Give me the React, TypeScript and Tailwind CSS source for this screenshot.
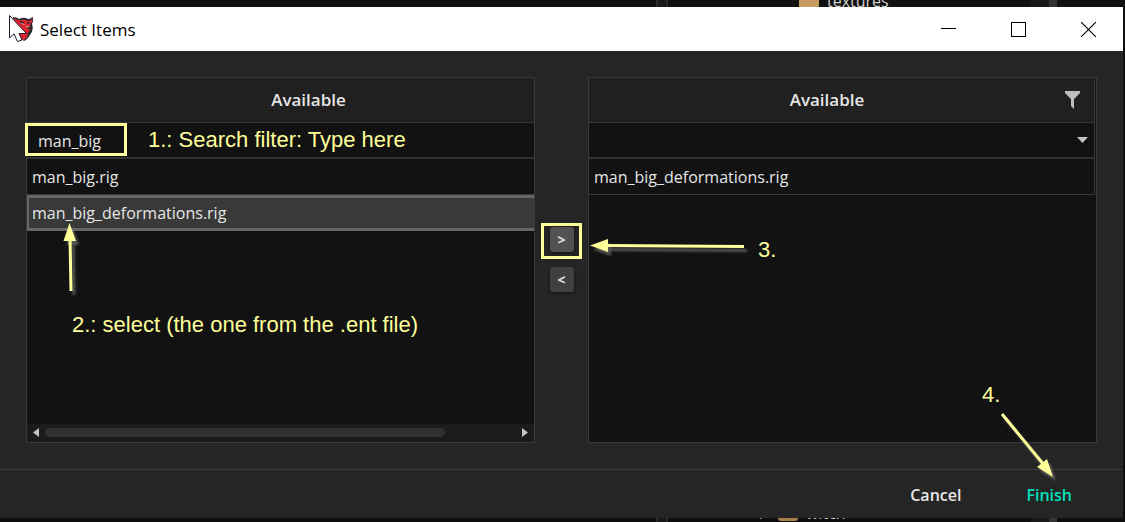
import { useState } from "react";
import type { ReactNode } from "react";

const NOTE = "absolute whitespace-nowrap font-['Liberation_Sans',sans-serif] text-[22px] leading-6 text-[#ffff99]";

function DevilLogo() {
  return (
    <svg className="h-8 w-8 shrink-0" viewBox="0 0 32 32" aria-hidden="true">
      <path d="M9 4 Q13 4 15 6 Q20 3.500 24 6 Q27 6 28.500 3.500 Q30 8 28 10.500 Q30 17 26 22 Q23 27 20 28 L12 22 Z" fill="#2b2b2f" />
      <path d="M10 5 Q14 8 17 7 Q21 6 24 8 Q28 8 28.500 4 Q29 8 26.500 11 Q27 17 24 20 L22.500 25 L19.500 27 Q14 24 13 15 Z" fill="#e0242f" />
      <path d="M16 8.500 l4 1.500 M25.500 9.500 l-2.500 1 M23 15.500 l3 -1" stroke="#2b2b2f" strokeWidth="1.400" />
      <path d="M17.500 10.500 l3 1 M22 14 l3 -0.500" stroke="#d0b0b0" strokeWidth="1" />
      <path d="M26.500 12 Q27.500 17 24.500 20.500" stroke="#2b2b2f" strokeWidth="1.500" fill="none" />
      <path d="M5.500 2.500 V25 L10 20.800 L13.500 28.500 L18 27 L15 20.500 H22.500 Z" fill="#fff" stroke="#1d1b2c" strokeWidth="1" />
    </svg>
  );
}

function TitleBar() {
  return (
    <header className="flex h-11 items-center bg-white pl-1 pr-[27px]">
      <DevilLogo />
      <h1 className="ml-1 flex-1 pt-px text-[17px] text-black">Select Items</h1>
      <div className="flex items-center gap-[55px]">
        <button aria-label="Minimize" className="block">
          <svg width="15" height="15" className="block"><path d="M0 6.500H15" stroke="#000" /></svg>
        </button>
        <button aria-label="Maximize" className="block">
          <svg width="15" height="15" className="block"><rect x="0.500" y="0.500" width="14" height="14" fill="none" stroke="#000" /></svg>
        </button>
        <button aria-label="Close" className="block">
          <svg width="15" height="15" className="block"><path d="M0 0L15 15M15 0L0 15" stroke="#000" strokeWidth="1.100" /></svg>
        </button>
      </div>
    </header>
  );
}

function Row({ name, selected = false, onSelect }: { name: string; selected?: boolean; onSelect?: () => void }) {
  return (
    <tr onClick={onSelect} aria-selected={selected}>
      <td
        className={
          selected
            ? "h-9 border-y-[3px] border-l-2 border-[#666666] bg-[#393939] p-0 pl-[3px]"
            : "h-9 border-b border-[#393939] bg-[#121212] p-0 pl-[5px]"
        }
      >
        {name}
      </td>
    </tr>
  );
}

type GridProps = { header: ReactNode; filter: ReactNode; children: ReactNode; footer?: ReactNode; wide?: boolean };

function Grid({ header, filter, children, footer, wide = false }: GridProps) {
  return (
    <section className="flex min-w-0 flex-1 flex-col border border-[#393939] bg-[#121212]">
      <div className={wide ? "flex-1" : "flex-1 pr-px"}>
        <table
          className={
            wide
              ? "w-full table-fixed border-separate border-spacing-0 text-left"
              : "w-full table-fixed border-separate border-spacing-0 border-r border-[#393939] text-left"
          }
        >
          <thead>
            <tr>
              <th className="h-[45px] border-b border-[#393939] bg-[#202020] p-0 text-center text-[17px] font-semibold">{header}</th>
            </tr>
            <tr>
              <td className="h-9 border-b-2 border-[#333333] bg-[#121212] p-0 align-top">{filter}</td>
            </tr>
          </thead>
          <tbody>{children}</tbody>
        </table>
      </div>
      {footer}
    </section>
  );
}

function ScrollBar() {
  return (
    <div className="flex h-[18px] items-start bg-[#1b1b1b] px-1.5 pt-1">
      <button aria-label="Scroll left" className="block">
        <svg width="6" height="9" className="block"><path d="M6 0V9L0 4.500Z" fill="#c4c4c4" /></svg>
      </button>
      <div className="mx-1.5 flex-1">
        <div className="h-[9px] w-[85%] rounded-full bg-[#303030]" />
      </div>
      <button aria-label="Scroll right" className="block">
        <svg width="6" height="9" className="block"><path d="M0 0V9L6 4.500Z" fill="#c4c4c4" /></svg>
      </button>
    </div>
  );
}

function Arrow({ className, width, height, line, head }: { className: string; width: number; height: number; line: string; head: string }) {
  return (
    <svg className={className} width={width} height={height} aria-hidden="true" overflow="visible">
      <g className="drop-shadow-[3px_4px_1px_rgba(130,130,130,0.6)]">
        <path d={line} stroke="#ffff99" strokeWidth="3" />
        <path d={head} fill="#ffff99" />
      </g>
    </svg>
  );
}

function TreeStrip({ bottom = false }: { bottom?: boolean }) {
  return (
    <div className={bottom ? "relative h-1 overflow-hidden bg-[#0e0e0e]" : "relative h-[7px] overflow-hidden bg-[#111111]"}>
      <div className="absolute left-[656px] h-full w-3 border-x-2 border-[#2a2a2a] bg-[#191919]" />
      <div className="absolute left-[1031px] h-full w-[18px] bg-[#191919]" />
      <div className="absolute left-[1049px] h-full w-2 bg-[#333333]" />
      {bottom ? (
        <>
          <div className="absolute left-[778px] top-0 h-[3px] w-5 rounded-b-sm bg-[#a77f4b]" />
          <div className="absolute left-[760px] top-0 h-px w-0.5 bg-[#777777]" />
          <span className="absolute bottom-[-3px] left-[806px] text-base leading-6 text-[#cccccc]">witch</span>
        </>
      ) : (
        <>
          <div className="absolute left-[799px] top-0 h-full w-5 bg-[#c49a60]" />
          <span className="absolute bottom-[-6px] left-[827px] text-base leading-6 text-[#d0d0d0]">textures</span>
        </>
      )}
    </div>
  );
}

export default function App() {
  const [query, setQuery] = useState("man_big");
  const [selected, setSelected] = useState("man_big_deformations.rig");
  const items = ["man_big.rig", "man_big_deformations.rig"];

  return (
    <div className="flex min-h-screen flex-col overflow-hidden bg-[#0e0e0e] font-['Open_Sans','Noto_Sans',sans-serif] text-base text-[#e6e6e6]">
      <TreeStrip />
      <div className="mr-0.5 flex flex-1 flex-col bg-[#252525]">
        <TitleBar />
        <main className="flex flex-1 p-[26px]">
          <div className="relative flex min-w-0 flex-1">
            <Grid
              wide
              header={<span className="block pl-14">Available</span>}
              filter={
                <input
                  aria-label="Search filter"
                  value={query}
                  onChange={(e) => setQuery(e.target.value)}
                  className="-ml-0.5 block h-[33px] w-[102px] border-[3px] border-[#ffff99] bg-transparent pl-2.5 pt-0.5 outline-none"
                />
              }
              footer={<ScrollBar />}
            >
              {items.map((name) => (
                <Row key={name} name={name} selected={name === selected} onSelect={() => setSelected(name)} />
              ))}
            </Grid>
            <span className={`${NOTE} left-[122px] top-[51px]`}>1.: Search filter: Type here</span>
            <span className={`${NOTE} left-[46px] top-[236px]`}>2.: select (the one from the .ent file)</span>
            <Arrow className="absolute left-[37px] top-[146px]" width={14} height={70} line="M7 14L8 68" head="M6.500 0L13 18H0.500Z" />
          </div>

          <div className="flex w-[53px] flex-col items-center gap-2 pt-[146px]">
            <div className="flex h-9 w-[41px] justify-center border-[3px] border-[#ffff99] pt-px">
              <button aria-label="Add" className="h-[25px] w-6 rounded-[3px] bg-[#525252] text-sm font-bold leading-6 shadow-[0_1px_3px_#111111]">
                &gt;
              </button>
            </div>
            <button aria-label="Remove" className="h-[25px] w-6 rounded-[3px] bg-[#404040] text-sm font-bold leading-6 shadow-[0_1px_3px_#111111]">
              &lt;
            </button>
          </div>

          <div className="relative flex min-w-0 flex-1">
            <Grid
              header={
                <div className="flex items-center pr-3.5">
                  <span className="flex-1">Available</span>
                  <button aria-label="Filter">
                    <svg width="15" height="18" className="block"><path d="M0 0H15V2L9 8V18L6 15V8L0 2Z" fill="#bdbdbd" /></svg>
                  </button>
                </div>
              }
              filter={
                <button aria-label="Choose filter" className="flex h-[34px] w-full items-center justify-end pr-1.5">
                  <svg width="11" height="6" className="block"><path d="M0 0H11L5.500 6Z" fill="#c4c4c4" /></svg>
                </button>
              }
            >
              <Row name="man_big_deformations.rig" />
            </Grid>
            <span className={`${NOTE} left-[170px] top-[161px]`}>3.</span>
            <Arrow className="absolute left-[2px] top-[162px]" width={155} height={14} line="M15 6.500L154 7.500" head="M0 6.500L18 0V13Z" />
            <span className={`${NOTE} left-[394px] top-[306px]`}>4.</span>
            <Arrow className="absolute left-[413px] top-[336px]" width={54} height={64} line="M1 1L43 52" head="M52 64L36 54L46 46Z" />
          </div>
        </main>
        <footer className="flex h-[49px] items-center justify-end gap-[65px] border-t border-[#393939] pr-[51px] pt-px font-semibold">
          <button>Cancel</button>
          <button className="text-[#00e0bc]">Finish</button>
        </footer>
      </div>
      <TreeStrip bottom />
    </div>
  );
}
